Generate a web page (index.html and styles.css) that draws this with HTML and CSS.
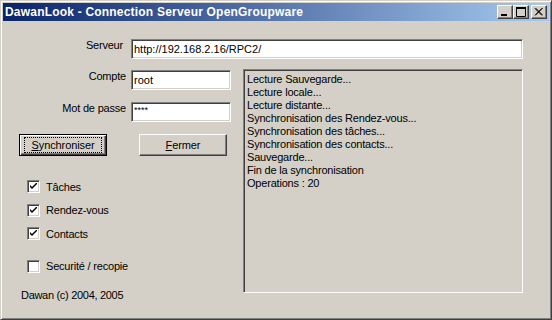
FILE: index.html
```html
<!DOCTYPE html>
<html lang="fr">
<head>
    <meta charset="UTF-8">
    <title>DawanLook - Connection Serveur OpenGroupware</title>
    <link rel="stylesheet" href="styles.css">
</head>
<body>
    <div class="window">
        <div class="titlebar">
            <span class="title">DawanLook - Connection Serveur OpenGroupware</span>
            <div class="caption-buttons">
                <div class="caption-btn">
                    <svg width="10" height="10" viewBox="0 0 10 10"><rect x="1" y="7" width="6" height="2" fill="#000"/></svg>
                </div>
                <div class="caption-btn">
                    <svg width="10" height="10" viewBox="0 0 10 10"><path d="M0.5 0.5h9v9h-9z" fill="none" stroke="#000"/><rect x="0" y="0" width="10" height="2" fill="#000"/></svg>
                </div>
                <div class="caption-btn close">
                    <svg width="10" height="10" viewBox="0 0 10 10"><path d="M1 1.5l7 7M1.5 1l7 7M8 1.5l-7 7M8.5 1l-7 7" stroke="#000" stroke-width="1"/></svg>
                </div>
            </div>
        </div>
        <div class="client">
            <div class="row">
                <span class="label label-server">Serveur</span>
                <div class="field field-wide">http://192.168.2.16/RPC2/</div>
            </div>
            <div class="main">
                <div class="left">
                    <div class="row">
                        <span class="label">Compte</span>
                        <div class="field">root</div>
                    </div>
                    <div class="row row-pass">
                        <span class="label">Mot de passe</span>
                        <div class="field password">****</div>
                    </div>
                    <div class="buttons">
                        <div class="btn btn-default"><span class="focus"><u>S</u>ynchroniser</span></div>
                        <div class="btn"><u>F</u>ermer</div>
                    </div>
                    <div class="checks">
                        <div class="check"><span class="box checked"><svg width="7" height="7" viewBox="0 0 7 7"><path d="M0 2l2 2 5-5v2l-5 5-2-2z" fill="#000"/></svg></span>Tâches</div>
                        <div class="check"><span class="box checked"><svg width="7" height="7" viewBox="0 0 7 7"><path d="M0 2l2 2 5-5v2l-5 5-2-2z" fill="#000"/></svg></span>Rendez-vous</div>
                        <div class="check"><span class="box checked"><svg width="7" height="7" viewBox="0 0 7 7"><path d="M0 2l2 2 5-5v2l-5 5-2-2z" fill="#000"/></svg></span>Contacts</div>
                        <div class="check check-separate"><span class="box"></span>Securité / recopie</div>
                    </div>
                    <div class="footer">Dawan (c) 2004, 2005</div>
                </div>
                <div class="log">
                    <div>Lecture Sauvegarde...</div>
                    <div>Lecture locale...</div>
                    <div>Lecture distante...</div>
                    <div>Synchronisation des Rendez-vous...</div>
                    <div>Synchronisation des tâches...</div>
                    <div>Synchronisation des contacts...</div>
                    <div>Sauvegarde...</div>
                    <div>Fin de la synchronisation</div>
                    <div>Operations : 20</div>
                </div>
            </div>
        </div>
    </div>
</body>
</html>
```

FILE: styles.css
```css
body {
    margin: 0;
    background: #d4d0c8;
    font-family: "Liberation Sans", Arial, sans-serif;
    font-size: 11px;
    color: #000;
}
.window {
    width: 552px;
    height: 320px;
    box-sizing: border-box;
    background: #d4d0c8;
    border: 1px solid;
    border-color: #d4d0c8 #404040 #404040 #d4d0c8;
    box-shadow: inset 1px 1px 0 #fff, inset -1px -1px 0 #808080;
    padding: 2px;
}
.titlebar {
    height: 18px;
    display: flex;
    align-items: center;
    justify-content: space-between;
    background: linear-gradient(to right, #0a246a, #a6caf0);
    padding: 0 2px 0 2px;
}
.title {
    color: #fff;
    font-weight: bold;
    font-size: 12px;
    letter-spacing: 0.2px;
}
.caption-buttons {
    display: flex;
}
.caption-btn {
    width: 16px;
    height: 14px;
    box-sizing: border-box;
    background: #d4d0c8;
    border: 1px solid;
    border-color: #fff #404040 #404040 #fff;
    box-shadow: inset -1px -1px 0 #808080;
    display: flex;
    align-items: center;
    justify-content: center;
}
.caption-btn.close {
    margin-left: 2px;
}
.client {
    padding-top: 18px;
    display: flex;
    flex-direction: column;
}
.row {
    display: flex;
    align-items: flex-start;
}
.label {
    width: 123px;
    margin-right: 5px;
    text-align: right;
    line-height: 13px;
    letter-spacing: -0.2px;
}
.label-server {
    width: 120px;
    margin-right: 8px;
}
.field {
    width: 100px;
    height: 20px;
    box-sizing: border-box;
    background: #fff;
    border: 1px solid;
    border-color: #808080 #fff #fff #808080;
    box-shadow: inset 1px 1px 0 #404040, inset -1px -1px 0 #d4d0c8;
    padding: 0 2px;
    line-height: 18px;
    white-space: nowrap;
}
.field-wide {
    width: 392px;
}
.password {
    font-size: 9px;
    line-height: 14px;
}
.main {
    display: flex;
    margin-top: 10px;
}
.left {
    width: 240px;
    display: flex;
    flex-direction: column;
}
.left .row {
    margin-top: 1px;
}
.left .row-pass {
    margin-top: 12px;
}
.buttons {
    display: flex;
    gap: 32px;
    margin: 12px 0 0 16px;
}
.btn {
    width: 88px;
    height: 22px;
    box-sizing: border-box;
    border: 1px solid;
    border-color: #fff #404040 #404040 #fff;
    box-shadow: inset -1px -1px 0 #808080;
    display: flex;
    align-items: center;
    justify-content: center;
    letter-spacing: -0.1px;
}
.btn-default {
    border: 1px solid #000;
    box-shadow: inset 1px 1px 0 #fff, inset -1px -1px 0 #404040, inset -2px -2px 0 #808080;
}
.focus {
    width: 76px;
    height: 14px;
    border: 1px dotted #000;
    display: flex;
    align-items: center;
    justify-content: center;
}
.checks {
    display: flex;
    flex-direction: column;
    gap: 10.5px;
    margin: 24px 0 0 24px;
}
.check {
    display: flex;
    align-items: center;
    gap: 6px;
    height: 13px;
    letter-spacing: -0.2px;
}
.check-separate {
    margin-top: 9px;
}
.box {
    width: 13px;
    height: 13px;
    box-sizing: border-box;
    background: #fff;
    border: 1px solid;
    border-color: #808080 #fff #fff #808080;
    box-shadow: inset 1px 1px 0 #404040, inset -1px -1px 0 #d4d0c8;
    display: flex;
    align-items: center;
    justify-content: center;
}
.footer {
    margin: 16px 0 0 18px;
    line-height: 13px;
    letter-spacing: -0.3px;
}
.log {
    width: 280px;
    height: 224px;
    box-sizing: border-box;
    border: 1px solid;
    border-color: #808080 #fff #fff #808080;
    box-shadow: inset 1px 1px 0 #404040, inset -1px -1px 0 #d4d0c8;
    padding: 3px 2px 0 3px;
    line-height: 13px;
    letter-spacing: -0.2px;
}
```
